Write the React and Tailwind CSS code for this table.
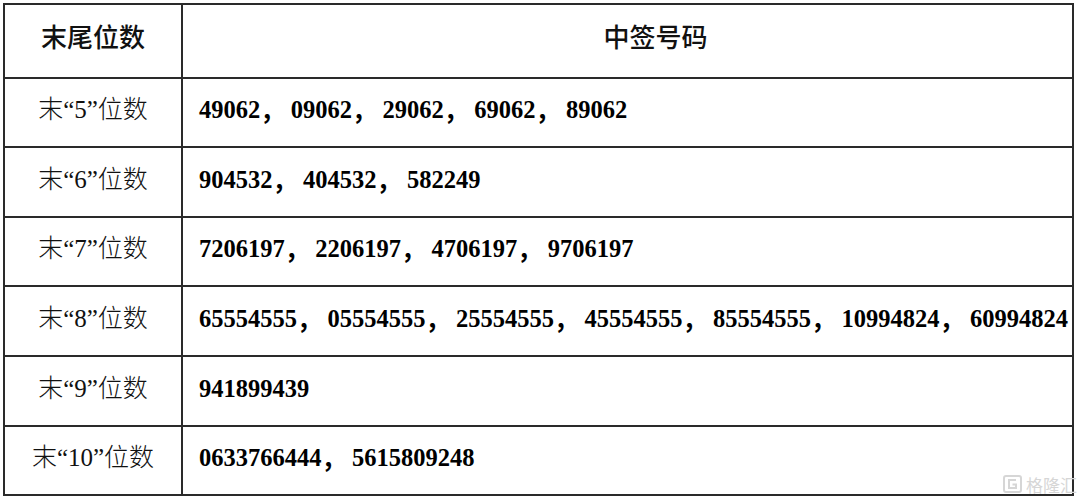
import React from "react";

const rows = [
  { n: "5", h: "h-[69px]", nums: ["49062", "09062", "29062", "69062", "89062"] },
  { n: "6", h: "h-[70px]", nums: ["904532", "404532", "582249"] },
  { n: "7", h: "h-[69px]", nums: ["7206197", "2206197", "4706197", "9706197"] },
  { n: "8", h: "h-[70px]", nums: ["65554555", "05554555", "25554555", "45554555", "85554555", "10994824", "60994824"] },
  { n: "9", h: "h-[70px]", nums: ["941899439"] },
  { n: "10", h: "h-[69px]", nums: ["0633766444", "5615809248"] },
];

const cjk = "font-['Noto_Sans_CJK_SC',sans-serif]";
const serif = "font-['Liberation_Serif','Noto_Sans_CJK_SC',serif]";

function Label({ n }) {
  return (
    <span className="text-[25px] text-[#111] whitespace-nowrap leading-none font-light">
      <span className={cjk}>末</span>
      <span className={`${serif} font-normal`}>“{n}”</span>
      <span className={cjk}>位数</span>
    </span>
  );
}

function Numbers({ nums }) {
  return (
    <div className={`flex items-center whitespace-nowrap ${serif} font-bold text-[24.5px] leading-none text-black`}>
      {nums.map((v, i) => (
        <span key={i} className="flex items-center">
          <span>{v}</span>
          {i < nums.length - 1 && <span className={`inline-block w-[30.5px] ${cjk} font-bold`}>，</span>}
        </span>
      ))}
    </div>
  );
}

export default function App() {
  return (
    <div className="relative w-[1079px] h-[501px] bg-white overflow-hidden">
      <div className="ml-[3px] mt-[3px] w-[1071px] border-t-2 border-l-2 border-r-2 border-[#2a2a2a] flex flex-col">
        {/* header */}
        <div className="flex h-[74px] border-b-2 border-[#2a2a2a]">
          <div className={`w-[178px] shrink-0 border-r-2 border-[#2a2a2a] flex items-center justify-center pb-[10px] ${cjk} font-medium text-[26px] leading-none text-[#111]`}>
            末尾位数
          </div>
          <div className={`flex-1 flex items-center justify-center pl-[56px] pb-[10px] ${cjk} font-medium text-[26px] leading-none text-[#111]`}>
            中签号码
          </div>
        </div>
        {rows.map((r) => (
          <div key={r.n} className={`flex ${r.h} border-b-2 border-[#2a2a2a]`}>
            <div className="w-[178px] shrink-0 border-r-2 border-[#2a2a2a] flex items-center justify-center pb-[8px]">
              <Label n={r.n} />
            </div>
            <div className="flex-1 flex items-center pl-[16px] pb-[4px] overflow-hidden">
              <Numbers nums={r.nums} />
            </div>
          </div>
        ))}
      </div>

      {/* watermark */}
      <div className="absolute left-[1003px] top-[475px] flex items-center gap-[4px] text-[#d6d6d6]">
        <svg width="19" height="18" viewBox="0 0 19 18" fill="none" stroke="#d6d6d6" strokeWidth="2">
          <rect x="1" y="1" width="17" height="16" rx="2" />
          <path d="M13 5H6v8h7V9.5H9.5" />
        </svg>
        <span className={`${cjk} text-[17px] leading-none`}>格隆汇</span>
      </div>
    </div>
  );
}
